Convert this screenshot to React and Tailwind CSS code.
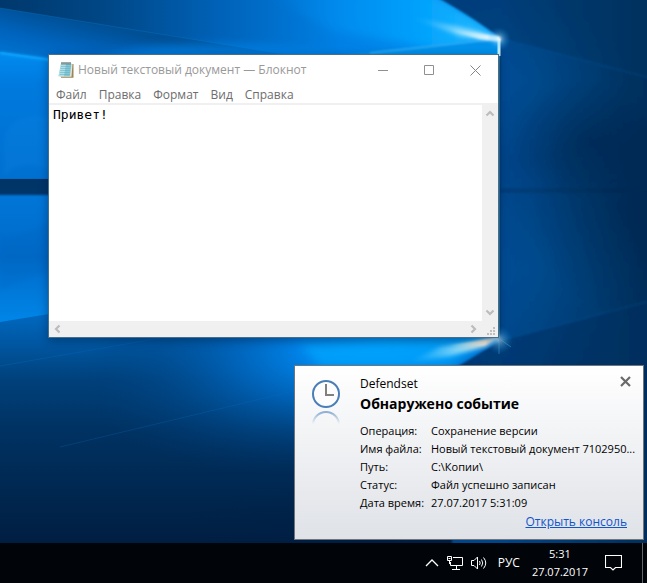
import React from 'react';

const MENU = ['Файл', 'Правка', 'Формат', 'Вид', 'Справка'];

const DETAILS = [
  ['Операция:', 'Сохранение версии'],
  ['Имя файла:', 'Новый текстовый документ 7102950...'],
  ['Путь:', 'C:\\Копии\\'],
  ['Статус:', 'Файл успешно записан'],
  ['Дата время:', '27.07.2017 5:31:09'],
];

function Wallpaper() {
  return (
    <svg
      className="absolute inset-0 h-full w-full"
      viewBox="0 0 647 543"
      preserveAspectRatio="none"
      aria-hidden="true"
    >
      <defs>
        <linearGradient id="right" gradientUnits="userSpaceOnUse" x1="499" y1="0" x2="647" y2="0">
          <stop offset="0" stopColor="#00458a" />
          <stop offset="0.5" stopColor="#003a70" />
          <stop offset="1" stopColor="#002f5c" />
        </linearGradient>
        <linearGradient id="top" gradientUnits="userSpaceOnUse" x1="0" y1="0" x2="500" y2="0">
          <stop offset="0" stopColor="#00386c" />
          <stop offset="0.22" stopColor="#004888" />
          <stop offset="0.44" stopColor="#0062b8" />
          <stop offset="0.68" stopColor="#0080e4" />
          <stop offset="1" stopColor="#0094f6" />
        </linearGradient>
        <linearGradient id="upperBeam" gradientUnits="userSpaceOnUse" x1="20" y1="8" x2="8" y2="60">
          <stop offset="0" stopColor="#005096" />
          <stop offset="0.5" stopColor="#0064be" />
          <stop offset="1" stopColor="#0076d4" />
        </linearGradient>
        <linearGradient id="upperPane" x1="0" y1="0" x2="0" y2="1">
          <stop offset="0" stopColor="#008cf0" />
          <stop offset="0.25" stopColor="#007ade" />
          <stop offset="1" stopColor="#0070d0" />
        </linearGradient>
        <linearGradient id="lowerPane" x1="0" y1="0" x2="0" y2="1">
          <stop offset="0" stopColor="#0078da" />
          <stop offset="0.5" stopColor="#006ac8" />
          <stop offset="1" stopColor="#0088ea" />
        </linearGradient>
        <linearGradient id="bottomBase" gradientUnits="userSpaceOnUse" x1="0" y1="318" x2="0" y2="543">
          <stop offset="0" stopColor="#0066bc" />
          <stop offset="0.12" stopColor="#0056a0" />
          <stop offset="0.28" stopColor="#00407a" />
          <stop offset="0.5" stopColor="#003262" />
          <stop offset="0.8" stopColor="#00264e" />
          <stop offset="1" stopColor="#001e42" />
        </linearGradient>
        <radialGradient id="bottomGlow" gradientUnits="userSpaceOnUse" cx="0" cy="0" r="1" gradientTransform="translate(390 335) rotate(-10) scale(310 130)">
          <stop offset="0" stopColor="#0096fa" />
          <stop offset="0.3" stopColor="#0084ea" stopOpacity="0.95" />
          <stop offset="0.5" stopColor="#006cc8" stopOpacity="0.75" />
          <stop offset="0.75" stopColor="#005098" stopOpacity="0.4" />
          <stop offset="1" stopColor="#003c78" stopOpacity="0" />
        </radialGradient>
        <linearGradient id="rays" gradientUnits="userSpaceOnUse" x1="410" y1="0" x2="500" y2="0">
          <stop offset="0" stopColor="#50c8ff" stopOpacity="0" />
          <stop offset="0.5" stopColor="#98e0ff" stopOpacity="0.7" />
          <stop offset="1" stopColor="#ffffff" />
        </linearGradient>
        <linearGradient id="warmRays" gradientUnits="userSpaceOnUse" x1="410" y1="0" x2="500" y2="0">
          <stop offset="0" stopColor="#50c8ff" stopOpacity="0" />
          <stop offset="0.5" stopColor="#98e0f8" stopOpacity="0.8" />
          <stop offset="0.85" stopColor="#fff0dc" />
          <stop offset="1" stopColor="#ffffff" />
        </linearGradient>
        <linearGradient id="topRays" gradientUnits="userSpaceOnUse" x1="270" y1="0" x2="480" y2="0">
          <stop offset="0" stopColor="#0096fa" stopOpacity="0" />
          <stop offset="0.7" stopColor="#00a6ff" stopOpacity="0.8" />
          <stop offset="1" stopColor="#20b8ff" />
        </linearGradient>
        <radialGradient id="flare">
          <stop offset="0" stopColor="#ffffff" />
          <stop offset="0.3" stopColor="#90dcff" stopOpacity="0.7" />
          <stop offset="1" stopColor="#0090f0" stopOpacity="0" />
        </radialGradient>
        <radialGradient id="haze">
          <stop offset="0" stopColor="#0064b4" stopOpacity="0.3" />
          <stop offset="1" stopColor="#0064b4" stopOpacity="0" />
        </radialGradient>
        <radialGradient id="shade">
          <stop offset="0" stopColor="#001f44" stopOpacity="0.4" />
          <stop offset="1" stopColor="#001f44" stopOpacity="0" />
        </radialGradient>
        <filter id="soft5" x="-50%" y="-50%" width="200%" height="200%"><feGaussianBlur stdDeviation="5" /></filter>
        <filter id="soft2" x="-20%" y="-50%" width="140%" height="200%"><feGaussianBlur stdDeviation="2" /></filter>
        <filter id="soft1" x="-20%" y="-50%" width="140%" height="200%"><feGaussianBlur stdDeviation="1" /></filter>
        <clipPath id="belowBeam"><path d="M0 322L49 314H499V543H0Z" /></clipPath>
        <clipPath id="nightSide"><path d="M424 -10Q472 16 500 38V341L452 370V560H680V-10Z" /></clipPath>
      </defs>

      <rect width="499" height="60" fill="url(#top)" />
      <path d="M0 8L160 34L300 57V90H0Z" fill="url(#upperBeam)" />
      <path d="M0 8L160 34L300 57" fill="none" stroke="#0a78cc" strokeOpacity="0.35" />
      <ellipse cx="220" cy="66" rx="130" ry="22" fill="#0084ea" opacity="0.7" filter="url(#soft5)" />
      <path d="M0 52L60 61V179H0Z" fill="url(#upperPane)" />
      <path d="M0 53L60 61" stroke="#0aa0fa" strokeWidth="3" filter="url(#soft1)" />
      <rect x="0" y="187" width="60" height="140" fill="url(#lowerPane)" />
      <path d="M4 136Q14 112 49 116V170Q20 158 4 176Z" fill="#1890ee" opacity="0.15" filter="url(#soft2)" />
      <path d="M0 235Q20 238 49 222V270L0 290Z" fill="#005cb4" opacity="0.15" filter="url(#soft2)" />
      <rect x="-4" y="180" width="64" height="15" fill="#003468" filter="url(#soft1)" />

      <g clipPath="url(#belowBeam)">
        <rect y="310" width="499" height="233" fill="url(#bottomBase)" />
        <rect y="200" width="499" height="343" fill="url(#bottomGlow)" />
        <path d="M60 447L294 391" stroke="#0872c6" strokeOpacity="0.25" />
        <path d="M0 366L160 338" stroke="#0872c6" strokeOpacity="0.3" />
        <path d="M300 345L498 334L450 366H320Z" fill="#00a8ff" opacity="0.7" filter="url(#soft5)" />
        <ellipse cx="310" cy="545" rx="150" ry="60" fill="url(#shade)" />
      </g>

      <path d="M260 -10H424Q466 12 499 37L440 50L330 30Z" fill="url(#topRays)" filter="url(#soft5)" />
      <path d="M360 53L498 39V55H340Z" fill="#0090ea" filter="url(#soft1)" />
      <path d="M370 53L498 39" stroke="#60c8ff" strokeOpacity="0.55" strokeWidth="1.5" filter="url(#soft1)" />

      <g filter="url(#soft1)">
        <g clipPath="url(#nightSide)">
          <rect x="420" y="-10" width="260" height="570" fill="url(#right)" />
          <ellipse cx="520" cy="80" rx="110" ry="80" fill="url(#haze)" />
          <ellipse cx="530" cy="270" rx="110" ry="110" fill="url(#haze)" />
          <ellipse cx="640" cy="210" rx="110" ry="110" fill="url(#shade)" />
          <ellipse cx="590" cy="140" rx="80" ry="60" fill="url(#shade)" />
          <path d="M499 38L424 -10H680V86Z" fill="#003464" opacity="0.4" />
          <path d="M499 38L680 86" stroke="#0a62a8" strokeOpacity="0.4" />
          <path d="M499 341L680 293V400H440V370Z" fill="#002e60" opacity="0.5" />
          <path d="M499 341L680 293" stroke="#0a62a8" strokeOpacity="0.4" />
          <path d="M499 188H680V193H499Z" fill="#00264a" opacity="0.25" />
        </g>
      </g>

      <path d="M410 17L460 27L500 38V41L460 36Z" fill="url(#rays)" filter="url(#soft2)" />
      <path d="M450 30L500 37V41L480 39Z" fill="url(#rays)" filter="url(#soft1)" />
      <path d="M499 39V56" stroke="#c8f2ff" strokeWidth="3" />
      <path d="M499 56V338" stroke="#5cb2c8" strokeOpacity="0.5" strokeWidth="2" />
      <circle cx="499" cy="39" r="12" fill="url(#flare)" opacity="0.6" />

      <path d="M410 362L440 347L500 337L486 346L450 356Z" fill="url(#warmRays)" filter="url(#soft2)" />
      <path d="M450 346L500 337L484 345Z" fill="url(#warmRays)" filter="url(#soft1)" />
      <circle cx="499" cy="340" r="14" fill="url(#flare)" opacity="0.55" />
      <path d="M491 333L511 347M499 336V354" stroke="#4eb8f0" strokeOpacity="0.4" />
    </svg>
  );
}

function NotepadIcon() {
  return (
    <svg className="h-4 w-4 shrink-0" viewBox="0 0 16 16" aria-hidden="true">
      <path d="M4 2H15.5V15.8H3Z" fill="#9a8458" />
      <path d="M3.5 2H14.5L13.5 14.8H2Z" fill="#e9e4cf" />
      <path d="M3 1.5H13.5L12 14.3H0.5Z" fill="#84c8d8" />
      <path d="M3 1.5H8L6 14.3H0.5Z" fill="#c4e8ee" opacity="0.7" />
      <path d="M3 4.5H12.5M2.6 6.5H12.2M2.3 8.5H12M2 10.5H11.7M1.7 12.5H11.5" stroke="#5aabbd" strokeWidth="0.5" />
      <path d="M4 0V2.6M6 0V2.6M8 0V2.6M10 0V2.6M12 0V2.6" stroke="#405158" strokeWidth="1" />
    </svg>
  );
}

function Chevron({ turn }) {
  return (
    <svg className={'block h-4 w-4 ' + turn} viewBox="0 0 16 16" aria-hidden="true">
      <path d="M4.5 10.5L8 7L11.5 10.5" fill="none" stroke="#bcbcbc" strokeWidth="2.2" />
    </svg>
  );
}

function Notepad() {
  return (
    <section
      aria-label="Блокнот"
      className="absolute left-[48px] top-[54px] flex h-[284px] w-[451px] flex-col border border-[#476f8c] bg-white shadow-[0_3px_9px_rgba(0,20,50,0.4)]"
    >
      <header className="flex h-[30px] shrink-0 items-center text-xs text-[#999999]">
        <div className="flex flex-1 items-center gap-1 pl-[9px]">
          <NotepadIcon />
          <h1 className="whitespace-nowrap">Новый текстовый документ — Блокнот</h1>
        </div>
        <button type="button" aria-label="Свернуть" className="flex h-[30px] w-[46px] items-center justify-center">
          <svg width="11" height="11" viewBox="0 0 11 11"><path d="M0 5.5H10" stroke="#909090" /></svg>
        </button>
        <button type="button" aria-label="Развернуть" className="flex h-[30px] w-[46px] items-center justify-center">
          <svg width="11" height="11" viewBox="0 0 11 11"><path d="M0.5 0.5H9.5V9.5H0.5Z" fill="none" stroke="#909090" /></svg>
        </button>
        <button type="button" aria-label="Закрыть" className="flex h-[30px] w-[46px] items-center justify-center">
          <svg width="11" height="11" viewBox="0 0 11 11"><path d="M0.5 0.5L10.5 10.5M10.5 0.5L0.5 10.5" stroke="#858585" /></svg>
        </button>
      </header>
      <nav className="flex h-5 shrink-0 items-center gap-3 border-b-2 border-[#f0f0f0] pl-[7px] pt-[2px] text-xs text-[#6d6d6d]">
        {MENU.map((item) => (
          <button key={item} type="button">{item}</button>
        ))}
      </nav>
      <div className="flex min-h-0 flex-1">
        <textarea
          aria-label="Текст документа"
          defaultValue="Привет!"
          spellCheck={false}
          className="min-w-0 flex-1 resize-none overflow-hidden bg-white px-1 pt-[2px] font-['DejaVu_Sans_Mono',monospace] text-[13px] leading-4 text-black outline-none"
        />
        <div className="flex w-4 flex-col justify-between bg-[#f0f0f0]">
          <button type="button" aria-label="Вверх"><Chevron turn="rotate-0" /></button>
          <button type="button" aria-label="Вниз"><Chevron turn="rotate-180" /></button>
        </div>
      </div>
      <div className="flex h-4 shrink-0 justify-between bg-[#f0f0f0]">
        <button type="button" aria-label="Влево"><Chevron turn="-rotate-90" /></button>
        <div className="flex">
          <button type="button" aria-label="Вправо"><Chevron turn="rotate-90" /></button>
          <svg className="h-4 w-4" viewBox="0 0 16 16" fill="#bfbfbf" aria-hidden="true">
            <path d="M11 6h2v2h-2zM8 9h2v2H8zM11 9h2v2h-2zM5 12h2v2H5zM8 12h2v2H8zM11 12h2v2h-2z" />
          </svg>
        </div>
      </div>
    </section>
  );
}

function ClockIcon() {
  return (
    <svg className="h-[50px] w-[30px] shrink-0" viewBox="0 0 30 50" aria-hidden="true">
      <defs>
        <linearGradient id="reflection" gradientUnits="userSpaceOnUse" x1="0" y1="33" x2="0" y2="45">
          <stop offset="0" stopColor="#4a7eb8" stopOpacity="0.6" />
          <stop offset="1" stopColor="#4a7eb8" stopOpacity="0" />
        </linearGradient>
      </defs>
      <circle cx="15" cy="15" r="13" fill="#ffffff" fillOpacity="0.6" stroke="#4a7eb8" strokeWidth="2" />
      <path d="M15 5V16H23" fill="none" stroke="#808080" strokeWidth="2" />
      <path d="M2 46A13 13 0 0 1 28 46" fill="none" stroke="url(#reflection)" strokeWidth="2" />
    </svg>
  );
}

function Notification() {
  return (
    <aside className="absolute bottom-[3px] right-[3px] flex h-[175px] w-[350px] border border-[#70757c] bg-linear-to-b from-white to-[#dfe2e7] pl-4 pt-[13px] text-[11px] text-black">
      <ClockIcon />
      <div className="flex min-w-0 flex-1 flex-col pl-[19px] pr-3">
        <p className="h-[13px] text-xs leading-[10px]">Defendset</p>
        <h2 className="text-[14px] font-bold leading-6">Обнаружено событие</h2>
        <dl className="mt-[6px] grid grid-cols-[71px_1fr] leading-[18px]">
          {DETAILS.map(([name, value]) => (
            <React.Fragment key={name}>
              <dt className="whitespace-nowrap">{name}</dt>
              <dd className="whitespace-nowrap">{value}</dd>
            </React.Fragment>
          ))}
        </dl>
        <a href="#console" className="mr-1 mt-px self-end text-xs leading-[18px] text-[#1155cc] underline">
          Открыть консоль
        </a>
      </div>
      <button type="button" aria-label="Закрыть уведомление" className="absolute right-3 top-[10px]">
        <svg width="11" height="11" viewBox="0 0 11 11"><path d="M1 1L10 10M10 1L1 10" stroke="#6a6a6a" strokeWidth="2.2" /></svg>
      </button>
    </aside>
  );
}

function Taskbar() {
  return (
    <footer className="flex h-10 shrink-0 items-center justify-end bg-[#010408] text-xs text-white">
      <button type="button" aria-label="Скрытые значки" className="mr-2">
        <svg className="block" width="14" height="14" viewBox="0 0 14 14" fill="none" stroke="#fff" strokeWidth="1.3"><path d="M1 10L7 4L13 10" /></svg>
      </button>
      <button type="button" aria-label="Сеть" className="mr-2">
        <svg className="block" width="16" height="16" viewBox="0 0 16 16" fill="none" stroke="#fff">
          <path d="M6 2.5H15.5V10.5H3.5V7M9.5 10.5V14M5 14.5H13M0.5 1.5H4.5V5.5H0.5ZM2.5 5.5V9M1.5 3.5H3.5" />
        </svg>
      </button>
      <button type="button" aria-label="Громкость" className="mr-[10px]">
        <svg className="block" width="17" height="16" viewBox="0 0 17 16" fill="none" stroke="#fff">
          <path d="M0.5 5.5H3L6.5 2V14L3 10.5H0.5ZM8.5 6Q9.8 8 8.5 10M10.5 4.5Q13 8 10.5 11.5M12.5 2.5Q17 8 12.5 13.5" />
        </svg>
      </button>
      <button type="button" className="mr-3">РУС</button>
      <button type="button" className="mr-[17px] text-center text-[11px] leading-[18px]">
        <time className="block">5:31</time>
        <time className="block">27.07.2017</time>
      </button>
      <button type="button" aria-label="Центр уведомлений" className="mr-5">
        <svg className="block" width="17" height="16" viewBox="0 0 17 16" fill="none" stroke="#fff" strokeWidth="1.1">
          <path d="M0.5 0.5H16.5V12.5H10.5L8 15L5.5 12.5H0.5Z" />
        </svg>
      </button>
      <div className="h-full w-[5px] border-l border-[#666666]" />
    </footer>
  );
}

export default function App() {
  return (
    <div className="flex h-screen w-full flex-col overflow-hidden bg-[#003060] font-['Open_Sans','Noto_Sans',sans-serif]">
      <main className="relative min-h-0 flex-1">
        <Wallpaper />
        <Notepad />
        <Notification />
      </main>
      <Taskbar />
    </div>
  );
}
